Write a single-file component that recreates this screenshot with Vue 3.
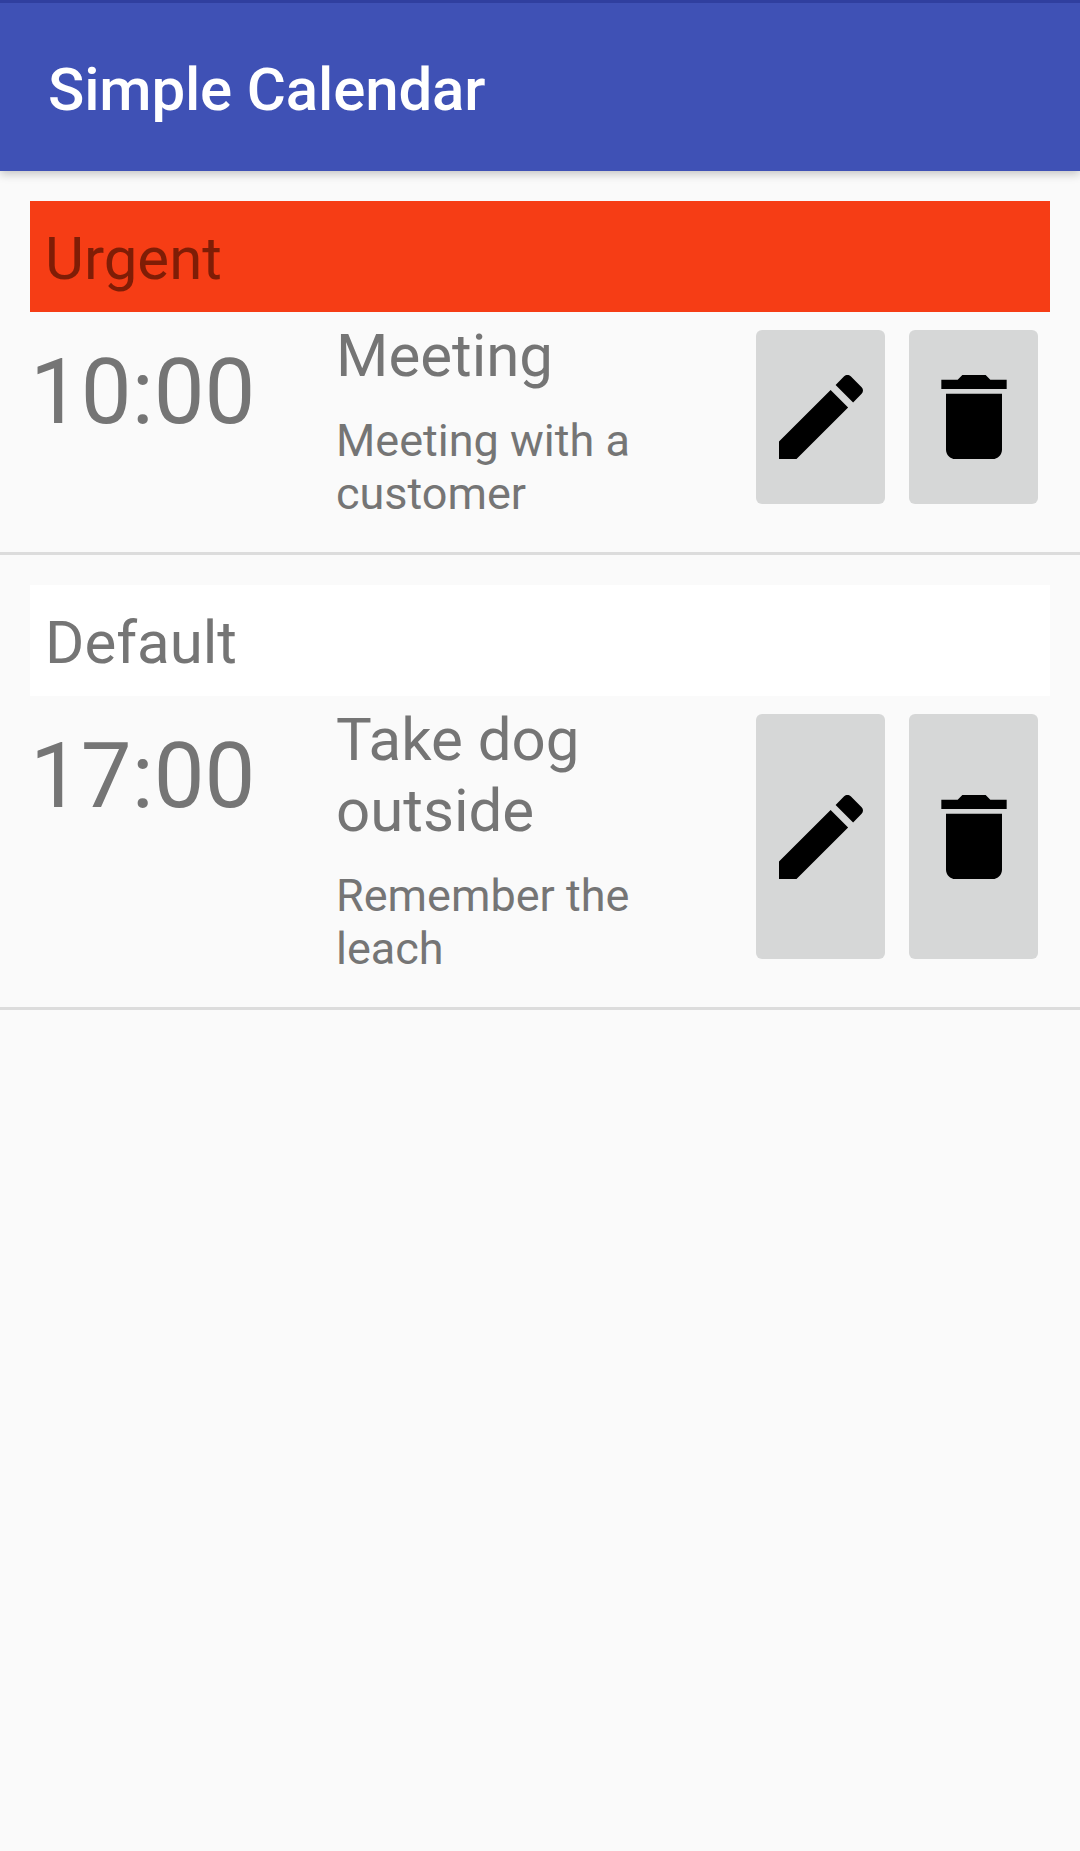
<template>
  <div class="screen">
    <header class="toolbar">
      <div class="status-strip"></div>
      <h1 class="app-title">Simple Calendar</h1>
    </header>

    <section v-for="item in items" :key="item.title" class="event">
      <div class="banner" :class="item.bannerClass">{{ item.category }}</div>
      <div class="event-row">
        <div class="time">{{ item.time }}</div>
        <div class="details">
          <div class="title">{{ item.title }}</div>
          <p class="desc">{{ item.desc }}</p>
        </div>
        <div class="actions">
          <button class="action" type="button" aria-label="Edit">
            <svg class="icon" viewBox="0 0 24 24">
              <path d="M3 17.25V21h3.75L17.81 9.94l-3.75-3.75L3 17.25zM20.71 7.04c.39-.39.39-1.02 0-1.41l-2.34-2.34c-.39-.39-1.02-.39-1.41 0l-1.83 1.83 3.75 3.75 1.83-1.83z" />
            </svg>
          </button>
          <button class="action" type="button" aria-label="Delete">
            <svg class="icon" viewBox="0 0 24 24">
              <path d="M6 19c0 1.1.9 2 2 2h8c1.1 0 2-.9 2-2V7H6v12zM19 4h-3.5l-1-1h-5l-1 1H5v2h14V4z" />
            </svg>
          </button>
        </div>
      </div>
      <div class="divider"></div>
    </section>
  </div>
</template>

<script setup>
const items = [
  {
    category: 'Urgent',
    bannerClass: 'urgent',
    time: '10:00',
    title: 'Meeting',
    desc: 'Meeting with a customer'
  },
  {
    category: 'Default',
    bannerClass: 'default',
    time: '17:00',
    title: 'Take dog outside',
    desc: 'Remember the leach'
  }
]
</script>

<style>
html, body { margin: 0; background: #fafafa; }
</style>

<style scoped>
.screen {
  width: 1080px;
  min-height: 1851px;
  background: #fafafa;
  font-family: Roboto, sans-serif;
  color: #757575;
  display: flex;
  flex-direction: column;
}

/* TOOLBAR */
.toolbar {
  height: 171px;
  background: #3f51b5;
  box-shadow: 0 3px 9px rgba(0, 0, 0, .22);
  margin-bottom: 30px;
}
.status-strip { height: 3px; background: #303f9f; }
.app-title {
  margin: 0;
  padding: 52px 0 0 48px;
  font-size: 60px;
  font-weight: 500;
  line-height: 70px;
  letter-spacing: -.16px;
  color: #fff;
}

/* BANNER */
.banner {
  margin: 0 30px;
  height: 111px;
  padding-left: 15px;
  font-size: 60px;
  line-height: 116px;
  box-sizing: border-box;
}
.urgent { background: #f63d15; color: #7f1d06; }
.default { background: #fff; }

/* ROW */
.event-row { display: flex; padding-left: 30px; padding-right: 42px; }
.time {
  width: 306px;
  flex: none;
  margin-top: 28px;
  font-size: 90.5px;
  line-height: 105px;
}
.details { width: 370px; margin-right: 50px; flex: none; padding: 8px 0 32px; }
.title { font-size: 60px; line-height: 71px; }
.desc { margin: 23px 0 0; font-size: 45px; line-height: 53px; }

/* BUTTONS */
.actions { display: flex; gap: 24px; padding: 18px 0 48px; }
.action {
  width: 129px;
  padding: 0;
  border: 0;
  border-radius: 6px;
  background: #d6d7d7;
  display: flex;
  align-items: center;
  justify-content: center;
}
.icon { width: 112px; height: 112px; fill: #000; filter: blur(.7px); }

.divider { height: 3px; background: #dcdcdc; margin-bottom: 30px; }
</style>
